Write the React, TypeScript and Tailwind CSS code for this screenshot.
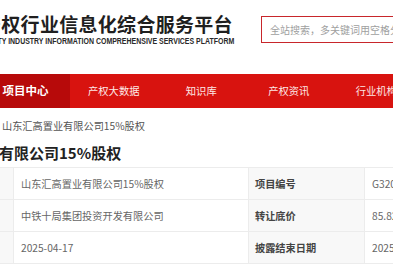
const nav = ["项目中心", "产权大数据", "知识库", "产权资讯", "行业机构"];

const rows = [
  { l1: "项目名称", v1: "山东汇高置业有限公司15%股权", l2: "项目编号", v2: "G32025SD1000040" },
  { l1: "转让方", v1: "中铁十局集团投资开发有限公司", l2: "转让底价", v2: "85.8276万元" },
  { l1: "披露开始日期", v1: "2025-04-17", l2: "披露结束日期", v2: "2025-05-15" },
];

export default function App() {
  return (
    <div className="w-[393px] h-[267px] overflow-hidden bg-white text-[#333] font-['Microsoft_YaHei','Noto_Sans_CJK_SC',sans-serif]">
      <header className="flex h-[74px] -ml-[18px]">
        <div className="w-[279px] shrink-0 pt-[13px]">
          <div className="text-[19px] leading-[21px] font-bold tracking-[0.3px] text-[#1f1f1f] whitespace-nowrap">
            产权行业信息化综合服务平台
          </div>
          <div className="mt-[3px] -ml-[14px] text-[8.5px] leading-[8px] font-bold text-[#2a2a2a] whitespace-nowrap font-['Liberation_Sans',sans-serif] origin-left scale-x-[0.82]">
            PROPERTY INDUSTRY INFORMATION COMPREHENSIVE SERVICES PLATFORM
          </div>
        </div>
        <div className="mt-[16px] h-[27px] w-[220px] shrink-0 border border-[#c8262b] flex items-center pl-[8px]">
          <span className="text-[10px] text-[#a0a0a0] whitespace-nowrap">全站搜索，多关键词用空格分隔</span>
        </div>
      </header>

      <nav className="flex h-[34px] bg-[#d8130f] -ml-[19px]">
        {nav.map((n, i) => (
          <div
            key={n}
            className={
              i === 0
                ? "w-[89px] shrink-0 flex items-center justify-center bg-[#b70a0a] text-white text-[11.5px] font-bold"
                : "w-[87.5px] shrink-0 flex items-center justify-center text-[#fde8e6] text-[10.3px]"
            }
          >
            {n}
          </div>
        ))}
      </nav>

      <div className="h-[36px] flex items-center pl-[2px] text-[10.2px] text-[#555] whitespace-nowrap">
        山东汇高置业有限公司15%股权
      </div>

      <div className="h-[23px] -ml-[91px] text-[15px] leading-[18px] font-bold text-[#222] whitespace-nowrap">
        山东汇高置业有限公司15%股权
      </div>

      <div className="-ml-[103px] border-t border-[#ececec]">
        {rows.map((r) => (
          <div key={r.l2} className="flex h-[32px] border-b border-[#ececec] text-[10.2px] whitespace-nowrap">
            <div className="w-[116px] shrink-0 bg-[#f8f8f8] flex items-center pl-[6px] font-bold text-[#444]">{r.l1}</div>
            <div className="w-[235px] shrink-0 border-l border-[#ececec] flex items-center pl-[7px] text-[#666]">{r.v1}</div>
            <div className="w-[116px] shrink-0 bg-[#f8f8f8] border-l border-[#ececec] flex items-center pl-[6px] font-bold text-[#444]">{r.l2}</div>
            <div className="w-[200px] shrink-0 border-l border-[#ececec] flex items-center pl-[7px] text-[#666]">{r.v2}</div>
          </div>
        ))}
      </div>
    </div>
  );
}
